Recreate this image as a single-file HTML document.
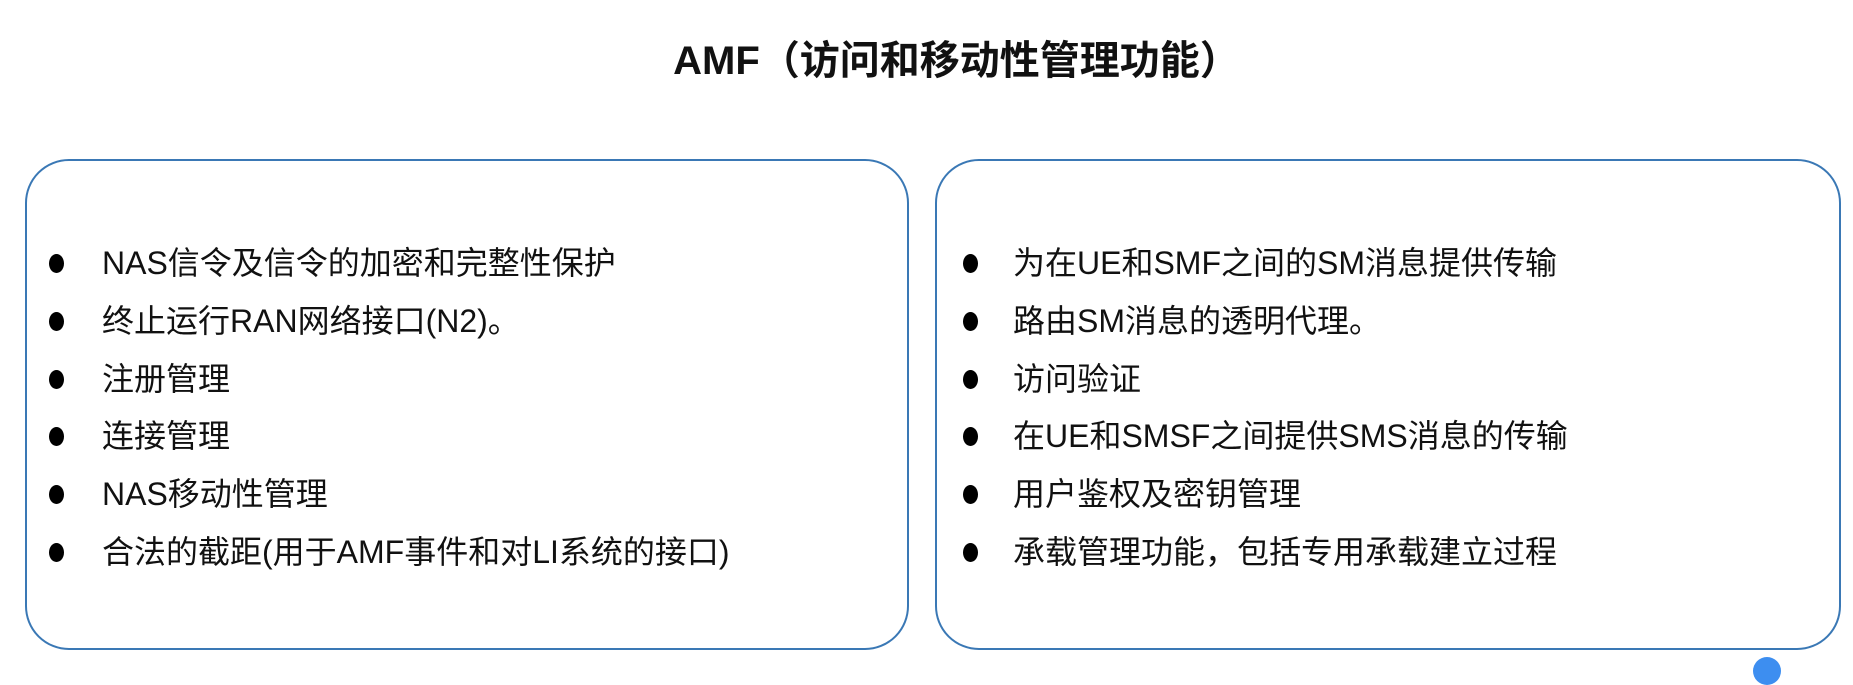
<!DOCTYPE html>
<html><head><meta charset="utf-8"><style>
body{margin:0;width:1853px;height:665px;background:#fff;position:relative;overflow:hidden;font-family:"Liberation Sans","Noto Sans CJK SC",sans-serif;color:#111}
.t{position:absolute;left:30px;width:1853px;top:36px;text-align:center;font-size:40px;font-weight:bold;line-height:50px}
.box{position:absolute;border:2px solid #3a78b5;border-radius:44px;top:159px;height:487px}
.li{position:absolute;font-size:32px;line-height:36px;white-space:nowrap}
.b{position:absolute;width:15px;height:19px;border-radius:50%;background:#000}
</style></head><body>
<div class="t">AMF（访问和移动性管理功能）</div>
<div class="box" style="left:25px;width:880px"></div>
<div class="box" style="left:935px;width:902px"></div>
<div id="L"></div>
<script>
var L=["NAS信令及信令的加密和完整性保护","终止运行RAN网络接口(N2)。","注册管理","连接管理","NAS移动性管理","合法的截距(用于AMF事件和对LI系统的接口)"];
var R=["为在UE和SMF之间的SM消息提供传输","路由SM消息的透明代理。","访问验证","在UE和SMSF之间提供SMS消息的传输","用户鉴权及密钥管理","承载管理功能，包括专用承载建立过程"];
var h="";
for(var i=0;i<6;i++){var y=263+i*57.8;
h+='<div class="b" style="left:49px;top:'+(y-9)+'px"></div><div class="li" style="left:102px;top:'+(y-18)+'px">'+L[i]+'</div>';
h+='<div class="b" style="left:963px;top:'+(y-9)+'px"></div><div class="li" style="left:1013px;top:'+(y-18)+'px">'+R[i]+'</div>';}
document.getElementById('L').innerHTML=h;
</script>
<div style="position:absolute;left:1753px;top:657px;width:28px;height:28px;border-radius:50%;background:#3d8ef0"></div>
</body></html>
